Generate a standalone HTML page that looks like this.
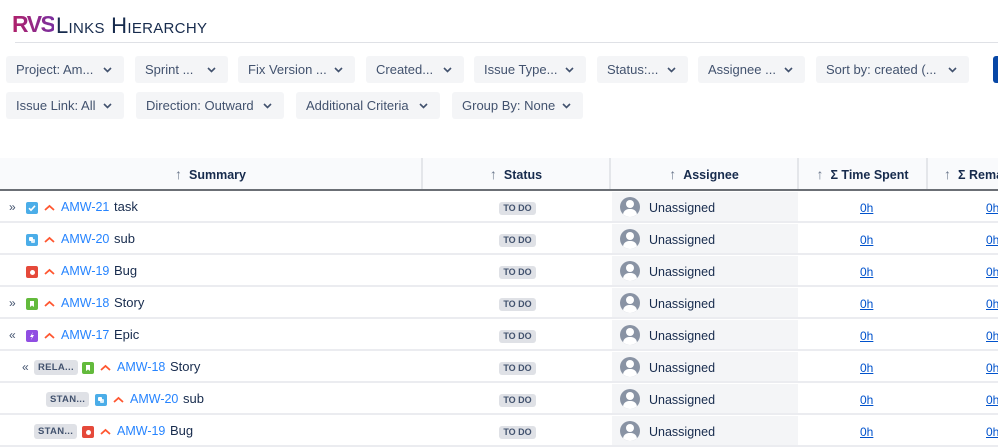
<!DOCTYPE html>
<html><head><meta charset="utf-8"><style>
*{box-sizing:border-box;margin:0;padding:0}
body{width:998px;height:446px;overflow:hidden;background:#fff;font-family:"Liberation Sans",sans-serif;position:relative;color:#172b4d}
.abs{position:absolute}
.btn{position:absolute;height:27px;background:#f4f5f7;border-radius:3px;font-size:13px;color:#42526e;line-height:28px;padding-left:10px}
.btn svg{position:absolute;right:12px;top:11px}
.hdr{position:absolute;top:158px;height:32px;background:#f9fafc;font-weight:bold;font-size:12.5px;color:#172b4d;line-height:32px;text-align:center;border-right:2px solid #e4e6ea;white-space:nowrap;overflow:hidden}
.hdr span{color:#6b778c;font-weight:normal;margin-right:7px;font-size:14px}
.row{position:absolute;left:0;width:998px;height:32px;border-bottom:2px solid #ebecf0;font-size:12px}
.ic{position:absolute;width:12px;height:12px;border-radius:2px;top:11px}
.ic i{position:absolute;background:#fff}
.pr{position:absolute;top:10px;color:#ff5630;font-size:12px}
.key{position:absolute;top:9px;color:#2684ff;font-size:12.5px}
.sm{position:absolute;top:8px;color:#172b4d;font-size:13px}
.todo{position:absolute;left:499px;top:11px;height:13px;width:37px;background:#dfe1e6;border-radius:3px;font-size:9px;font-weight:bold;color:#42526e;text-align:center;line-height:13px}
.as{position:absolute;left:612px;top:1px;width:186px;height:29px;background:#f4f5f7}
.av{position:absolute;left:8px;top:5px;width:20px;height:20px;border-radius:50%;background:#8993a4;overflow:hidden}
.as b{position:absolute;left:37px;top:9px;font-weight:normal;font-size:12.5px;color:#172b4d}
.oh{position:absolute;top:10px;font-size:12px;color:#0052cc;text-decoration:underline}
.lab{position:absolute;top:9px;height:15px;background:#dfe1e6;border-radius:3px;font-size:9.5px;font-weight:bold;color:#42526e;line-height:15px;padding:0 4px;letter-spacing:0.3px}
.exp{position:absolute;top:9px;color:#42526e;font-size:12px}
</style></head><body>
<div class="abs" style="left:12px;top:11px;font-size:23px;font-weight:bold;letter-spacing:-1.5px;background:linear-gradient(90deg,#b0206a,#7a2f9f);-webkit-background-clip:text;color:transparent">RVS</div>
<div class="abs" style="left:56px;top:13px;font-size:22px;color:#172b4d;font-variant:small-caps;letter-spacing:0.3px;font-family:'Liberation Sans',sans-serif">Links Hierarchy</div>
<div class="abs" style="left:15px;top:42px;width:983px;height:1px;background:#dfe1e6"></div>

<div class="btn" style="left:6px;top:56px;width:118px">Project: Am...<svg width="9" height="6"><path d="M1 1l3.5 3.5L8 1" stroke="#42526e" stroke-width="1.6" fill="none"/></svg></div>
<div class="btn" style="left:135px;top:56px;width:93px">Sprint ...<svg width="9" height="6"><path d="M1 1l3.5 3.5L8 1" stroke="#42526e" stroke-width="1.6" fill="none"/></svg></div>
<div class="btn" style="left:238px;top:56px;width:117px">Fix Version ...<svg width="9" height="6"><path d="M1 1l3.5 3.5L8 1" stroke="#42526e" stroke-width="1.6" fill="none"/></svg></div>
<div class="btn" style="left:366px;top:56px;width:98px">Created...<svg width="9" height="6"><path d="M1 1l3.5 3.5L8 1" stroke="#42526e" stroke-width="1.6" fill="none"/></svg></div>
<div class="btn" style="left:474px;top:56px;width:112px">Issue Type...<svg width="9" height="6"><path d="M1 1l3.5 3.5L8 1" stroke="#42526e" stroke-width="1.6" fill="none"/></svg></div>
<div class="btn" style="left:597px;top:56px;width:91px">Status:...<svg width="9" height="6"><path d="M1 1l3.5 3.5L8 1" stroke="#42526e" stroke-width="1.6" fill="none"/></svg></div>
<div class="btn" style="left:698px;top:56px;width:107px">Assignee ...<svg width="9" height="6"><path d="M1 1l3.5 3.5L8 1" stroke="#42526e" stroke-width="1.6" fill="none"/></svg></div>
<div class="btn" style="left:816px;top:56px;width:153px">Sort by: created (...<svg width="9" height="6"><path d="M1 1l3.5 3.5L8 1" stroke="#42526e" stroke-width="1.6" fill="none"/></svg></div>
<div class="abs" style="left:993px;top:56px;width:10px;height:27px;background:#0747a6;border-radius:3px"></div>
<div class="btn" style="left:6px;top:92px;width:118px">Issue Link: All<svg width="9" height="6"><path d="M1 1l3.5 3.5L8 1" stroke="#42526e" stroke-width="1.6" fill="none"/></svg></div>
<div class="btn" style="left:136px;top:92px;width:148px">Direction: Outward<svg width="9" height="6"><path d="M1 1l3.5 3.5L8 1" stroke="#42526e" stroke-width="1.6" fill="none"/></svg></div>
<div class="btn" style="left:296px;top:92px;width:144px">Additional Criteria<svg width="9" height="6"><path d="M1 1l3.5 3.5L8 1" stroke="#42526e" stroke-width="1.6" fill="none"/></svg></div>
<div class="btn" style="left:452px;top:92px;width:131px">Group By: None<svg width="9" height="6"><path d="M1 1l3.5 3.5L8 1" stroke="#42526e" stroke-width="1.6" fill="none"/></svg></div>

<div class="hdr" style="left:0;width:423px"><span>↑</span>Summary</div>
<div class="hdr" style="left:423px;width:188px"><span>↑</span>Status</div>
<div class="hdr" style="left:611px;width:188px"><span>↑</span>Assignee</div>
<div class="hdr" style="left:799px;width:129px"><span>↑</span>Σ Time Spent</div>
<div class="hdr" style="left:928px;width:70px;border-right:none;text-align:left;padding-left:16px"><span>↑</span>Σ Remaining</div>
<div class="abs" style="left:0;top:189px;width:998px;height:2px;background:#6b6f75"></div>

<div id="rows"></div>
<script>
var G={'#4bade8':'<svg width="12" height="12" style="position:absolute;left:0;top:0"><path d="M3 6.2l2 2 4-4.4" stroke="#fff" stroke-width="1.6" fill="none"/></svg>',
'sub':'<i style="left:3px;top:3px;width:4px;height:4px;border-radius:1px"></i><i style="left:5px;top:5px;width:4px;height:4px;border-radius:1px;opacity:.8"></i>',
'#e5493a':'<i style="left:3.5px;top:3.5px;width:5px;height:5px;border-radius:50%"></i>',
'#63ba3c':'<svg width="12" height="12" style="position:absolute;left:0;top:0"><path d="M4 3h4v6l-2-1.5L4 9z" fill="#fff"/></svg>',
'#904ee2':'<svg width="12" height="12" style="position:absolute;left:0;top:0"><path d="M7 2L4 7h2l-1 3 3-5H6z" fill="#fff"/></svg>'};
var rows=[
[0,'»',0,'','#4bade8','AMW-21','task',28],
[0,'',0,'','#4bade8','AMW-20','sub',28],
[0,'',0,'','#e5493a','AMW-19','Bug',28],
[0,'»',0,'','#63ba3c','AMW-18','Story',28],
[0,'«',0,'','#904ee2','AMW-17','Epic',28],
[0,'«',22,'RELA...','#63ba3c','AMW-18','Story',84],
[0,'',0,'STAN...','#4bade8','AMW-20','sub',97],
[0,'',0,'STAN...','#e5493a','AMW-19','Bug',84]];
var h='';
rows.forEach(function(r,i){
 var y=191+i*32,x=r[7];
 h+='<div class="row" style="top:'+y+'px">';
 if(r[1]){var ex=i==5?22:9;h+='<div class="exp" style="left:'+ex+'px">'+r[1]+'</div>';}
 if(r[3]){var lx=i==6?46:34;h+='<div class="lab" style="left:'+lx+'px">'+r[3]+'</div>';}
 var g=(r[6]=='sub')?G.sub:G[r[4]];
 h+='<div class="ic" style="left:'+(x-2)+'px;background:'+r[4]+'">'+g+'</div>';
 h+='<div class="pr" style="left:'+(x+16)+'px"><svg width="11" height="8"><path d="M1 6l4.5-4 4.5 4" stroke="#ff5630" stroke-width="1.8" fill="none"/></svg></div>';
 h+='<div class="key" style="left:'+(x+33)+'px">'+r[5]+'</div>';
 h+='<div class="sm" style="left:'+(x+86)+'px">'+r[6]+'</div>';
 h+='<div class="todo">TO DO</div>';
 h+='<div class="as"><div class="av"><div style="position:absolute;left:6px;top:3px;width:8px;height:8px;border-radius:50%;background:#fff"></div><div style="position:absolute;left:3px;top:12px;width:14px;height:10px;border-radius:6px 6px 0 0;background:#fff"></div></div><b>Unassigned</b></div>';
 h+='<div class="oh" style="left:860px">0h</div><div class="oh" style="left:986px">0h</div>';
 h+='</div>';
});
document.getElementById('rows').innerHTML=h;
</script>
</body></html>
